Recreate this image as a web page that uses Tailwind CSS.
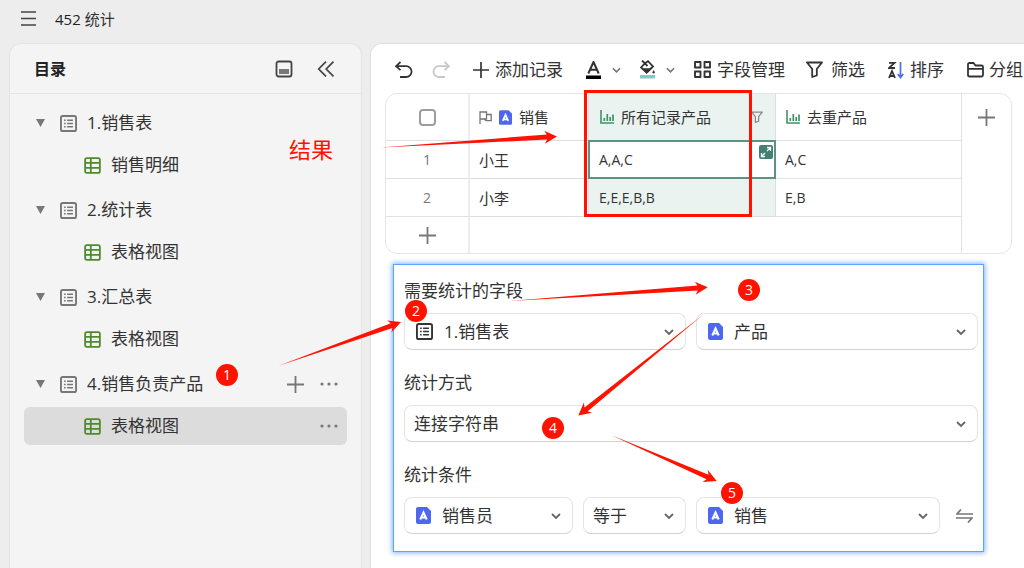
<!DOCTYPE html>
<html lang="zh-CN">

<head>
    <meta charset="UTF-8">
    <meta name="viewport" content="width=device-width, initial-scale=1.0">
    <title>452 统计</title>
    <script src="https://cdn.jsdelivr.net/npm/@tailwindcss/browser@4"></script>
</head>

<body class="relative flex flex-col h-screen overflow-hidden bg-[#ededed] text-[#333] text-[17px] font-['Open_Sans','Noto_Sans_CJK_SC',sans-serif]">
    <!-- shared icons -->
    <svg class="hidden">
        <symbol id="list" viewBox="0 0 18 18">
            <rect x="1" y="1" width="16" height="16" rx="2" fill="none" stroke="currentColor" stroke-width="2" />
            <path d="M4.3 5.5h1.700M4.3 9h1.700M4.3 12.5h1.700M7.5 5.5h6.200M7.5 9h6.200M7.5 12.5h6.200" fill="none" stroke="currentColor" stroke-width="1.7" />
        </symbol>
        <symbol id="grid" viewBox="0 0 18 18">
            <path d="M3 1.2h12q1.8 0 1.8 1.8v12q0 1.8-1.8 1.8H3q-1.8 0-1.8-1.8V3q0-1.8 1.8-1.8zM1.2 6.3h15.6M1.2 11.5h15.6M7.2 1.2v15.6" fill="none" stroke="currentColor" stroke-width="1.9" />
        </symbol>
        <symbol id="chevron" viewBox="0 0 10 6">
            <path d="M1 1l4 4 4-4" fill="none" stroke="currentColor" stroke-width="1.8" />
        </symbol>
        <symbol id="plus" viewBox="0 0 17 17">
            <path d="M8.5 0v17M0 8.5h17" fill="none" stroke="currentColor" stroke-width="1.8" />
        </symbol>
        <symbol id="dots" viewBox="0 0 18 4">
            <circle cx="2" cy="2" r="1.6" fill="currentColor" />
            <circle cx="9" cy="2" r="1.6" fill="currentColor" />
            <circle cx="16" cy="2" r="1.6" fill="currentColor" />
        </symbol>
        <symbol id="text-field" viewBox="0 0 15 17">
            <path d="M2 0h9l4 4v11q0 2-2 2H2q-2 0-2-2V2q0-2 2-2z" fill="#4f66f0" />
            <path d="M4.300 12.500L7.500 5.500 10.700 12.500M5.300 10.600h4.400" fill="none" stroke="#fff" stroke-width="2" />
        </symbol>
        <symbol id="chart" viewBox="0 0 14 14">
            <path d="M1 0v13h13" fill="none" stroke="currentColor" stroke-width="1.6" />
            <path d="M4.300 11V8M7.300 11V4M10.200 11V7M13 11V4.500" fill="none" stroke="currentColor" stroke-width="1.7" />
        </symbol>
        <symbol id="funnel" viewBox="0 0 17 17">
            <path d="M1 1.500h15L10.800 8v6.500L6.200 16V8z" fill="none" stroke="currentColor" stroke-width="1.8" stroke-linejoin="round" />
        </symbol>
    </svg>

    <header class="flex items-center gap-[19px] h-[43px] pb-1.5 px-[21px] shrink-0">
        <button aria-label="菜单">
            <svg class="w-[15px] h-[15px] block" viewBox="0 0 15 15">
                <path d="M0 1h15M0 7.500h15M0 14h15" stroke="#444" stroke-width="1.6" />
            </svg>
        </button>
        <h1 class="text-[15px] leading-6"><span class="font-medium text-[#222]">452</span> 统计</h1>
    </header>

    <div class="flex flex-1 min-h-0 pl-[9px] gap-2">
        <aside class="w-[353px] shrink-0 bg-[#f4f4f4] border border-b-0 border-[#e3e3e3] rounded-t-xl">
            <div class="flex items-center h-[50px] pl-6 pr-[26px] border-b border-[#e5e5e5]">
                <h2 class="flex-1 text-base font-bold text-[#222]">目录</h2>
                <button aria-label="面板" class="mr-6">
                    <svg class="w-[18px] h-[18px] block" viewBox="0 0 18 18">
                        <rect x="1.500" y="1.500" width="15" height="15" rx="2" fill="none" stroke="#444" stroke-width="1.8" />
                        <rect x="4" y="9" width="10" height="5" fill="#777" />
                    </svg>
                </button>
                <button aria-label="收起">
                    <svg class="w-[18px] h-[16px] block" viewBox="0 0 18 16">
                        <path d="M9 .7L1.700 8 9 15.300M16.500 .7L9.200 8l7.300 7.300" fill="none" stroke="#444" stroke-width="1.7" />
                    </svg>
                </button>
            </div>

            <nav class="flex flex-col gap-[7px] pt-[10px] px-[14px]">
                <div class="flex flex-col gap-1">
                    <a href="#" class="flex items-center h-[38px] pl-3 pr-[9px]">
                        <svg class="w-[9px] h-2 mr-[15px]" viewBox="0 0 9 8"><path d="M0 0h9L4.500 8z" fill="#777" /></svg>
                        <svg class="w-[17px] h-[17px] mr-[10px] text-[#777]"><use href="#list" /></svg>
                        1.销售表
                    </a>
                    <a href="#" class="flex items-center h-[38px] pl-[60px] pr-[9px]">
                        <svg class="w-[17px] h-[17px] mr-[10px] text-[#4f8a2b]"><use href="#grid" /></svg>
                        销售明细
                    </a>
                </div>
                <div class="flex flex-col gap-1">
                    <a href="#" class="flex items-center h-[38px] pl-3 pr-[9px]">
                        <svg class="w-[9px] h-2 mr-[15px]" viewBox="0 0 9 8"><path d="M0 0h9L4.500 8z" fill="#777" /></svg>
                        <svg class="w-[17px] h-[17px] mr-[10px] text-[#777]"><use href="#list" /></svg>
                        2.统计表
                    </a>
                    <a href="#" class="flex items-center h-[38px] pl-[60px] pr-[9px]">
                        <svg class="w-[17px] h-[17px] mr-[10px] text-[#4f8a2b]"><use href="#grid" /></svg>
                        表格视图
                    </a>
                </div>
                <div class="flex flex-col gap-1">
                    <a href="#" class="flex items-center h-[38px] pl-3 pr-[9px]">
                        <svg class="w-[9px] h-2 mr-[15px]" viewBox="0 0 9 8"><path d="M0 0h9L4.500 8z" fill="#777" /></svg>
                        <svg class="w-[17px] h-[17px] mr-[10px] text-[#777]"><use href="#list" /></svg>
                        3.汇总表
                    </a>
                    <a href="#" class="flex items-center h-[38px] pl-[60px] pr-[9px]">
                        <svg class="w-[17px] h-[17px] mr-[10px] text-[#4f8a2b]"><use href="#grid" /></svg>
                        表格视图
                    </a>
                </div>
                <div class="flex flex-col gap-1">
                    <div class="flex items-center h-[38px] pl-3 pr-[9px]">
                        <a href="#" class="flex items-center flex-1">
                            <svg class="w-[9px] h-2 mr-[15px]" viewBox="0 0 9 8"><path d="M0 0h9L4.500 8z" fill="#777" /></svg>
                            <svg class="w-[17px] h-[17px] mr-[10px] text-[#777]"><use href="#list" /></svg>
                            4.销售负责产品
                        </a>
                        <button aria-label="新建" class="mr-4"><svg class="w-[17px] h-[17px] block text-[#777]"><use href="#plus" /></svg></button>
                        <button aria-label="更多"><svg class="w-[18px] h-1 block text-[#777]"><use href="#dots" /></svg></button>
                    </div>
                    <div class="flex items-center h-[38px] pl-[60px] pr-[9px] rounded-md bg-[#dcdcdc]">
                        <a href="#" class="flex items-center flex-1">
                            <svg class="w-[17px] h-[17px] mr-[10px] text-[#4f8a2b]"><use href="#grid" /></svg>
                            表格视图
                        </a>
                        <button aria-label="更多"><svg class="w-[18px] h-1 block text-[#777]"><use href="#dots" /></svg></button>
                    </div>
                </div>
            </nav>
        </aside>

        <main class="flex-1 min-w-0 overflow-hidden bg-white border-t border-l border-[#dfdfdf] rounded-tl-xl">
            <div class="flex items-center gap-[19px] h-[49px] pt-0.5 pl-6 whitespace-nowrap *:shrink-0">
                <button aria-label="撤销">
                    <svg class="w-[18px] h-[18px] block" viewBox="0 0 18 18">
                        <path d="M5.500 1L1 5.200l4.500 4M1.500 5.200h9.700a5.400 5.400 0 0 1 0 10.800H5" fill="none" stroke="#333" stroke-width="1.8" />
                    </svg>
                </button>
                <button aria-label="重做" class="mr-1">
                    <svg class="w-[18px] h-[18px] block" viewBox="0 0 18 18">
                        <path d="M12.500 1L17 5.200l-4.500 4M16.500 5.200H6.800a5.400 5.400 0 0 0 0 10.800H13" fill="none" stroke="#c8c8c8" stroke-width="1.8" />
                    </svg>
                </button>
                <button class="flex items-center gap-1.5 mr-1">
                    <svg class="w-4 h-4"><use href="#plus" /></svg>
                    添加记录
                </button>
                <button aria-label="文字颜色" class="flex items-center gap-[11px]">
                    <svg class="w-[15px] h-[18px]" viewBox="0 0 15 18">
                        <path d="M2.300 12.500L7.500 1 12.700 12.500M4.200 8.800h6.600" fill="none" stroke="#333" stroke-width="2" stroke-linejoin="round" />
                        <path d="M0 14.500h15v3.500H0z" fill="#000" />
                    </svg>
                    <svg class="w-[9px] h-[6px] text-[#777]"><use href="#chevron" /></svg>
                </button>
                <button aria-label="填充颜色" class="flex items-center gap-[11px]">
                    <svg class="w-[15px] h-[19px]" viewBox="0 0 15 19">
                        <path d="M2 .5l5.500 5.500M4.500 3.500L8 1.200l5 5.300-6.300 6L1 7.500 4.500 3.800" fill="none" stroke="#333" stroke-width="1.8" />
                        <path d="M1 8.200h11.500L6.700 13.800zM13.600 10l1.400 2.500q-1.400 2-2.800 0z" fill="#333" />
                        <path d="M0 15h15v3.500H0z" fill="#7ecbc8" />
                    </svg>
                    <svg class="w-[9px] h-[6px] text-[#777]"><use href="#chevron" /></svg>
                </button>
                <button class="flex items-center gap-1.5 mr-0.5">
                    <svg class="w-[17px] h-[17px]" viewBox="0 0 17 17">
                        <path d="M1 1h5.500v5.500H1zM10.500 1H16v5.500h-5.500zM1 10.500h5.500V16H1zM10.500 10.500H16V16h-5.500z" fill="none" stroke="#333" stroke-width="1.9" stroke-linejoin="round" />
                    </svg>
                    字段管理
                </button>
                <button class="flex items-center gap-2 mr-1">
                    <svg class="w-[17px] h-[17px]"><use href="#funnel" /></svg>
                    筛选
                </button>
                <button class="flex items-center gap-1.5 mr-1">
                    <svg class="w-4 h-[18px]" viewBox="0 0 16 18">
                        <path d="M1 1.800h5.500L1 7h6M1 17l3-7 3 7M2 15h4" fill="none" stroke="#333" stroke-width="1.8" />
                        <path d="M12.500 1v15M9.800 13l2.700 3.500L15.200 13" fill="none" stroke="#4a6fe8" stroke-width="1.7" />
                    </svg>
                    排序
                </button>
                <button class="flex items-center gap-[5px]">
                    <svg class="w-[17px] h-[16px]" viewBox="0 0 17 16">
                        <path d="M1 13V2.500Q1 1 2.500 1H6.500l2 2.500h6q1.500 0 1.500 1.500v8q0 1.500-1.500 1.500h-12Q1 14.500 1 13zM1 6.800h15" fill="none" stroke="#333" stroke-width="1.8" />
                    </svg>
                    分组
                </button>
            </div>

            <div class="ml-[14px] mr-3 border border-[#e5e5e5] rounded-xl overflow-hidden">
                <table class="w-full table-fixed border-separate border-spacing-0 text-left">
                    <colgroup>
                        <col class="w-[84px]">
                        <col class="w-[119px]">
                        <col class="w-[187px]">
                        <col>
                        <col class="w-[49px]">
                    </colgroup>
                    <thead>
                        <tr class="h-[47px] text-[15px]">
                            <th class="border-b border-r-2 border-b-[#e0e0e0] border-r-[#eee]">
                                <input type="checkbox" aria-label="全选" class="block mx-auto w-[17px] h-[17px] appearance-none border-2 border-[#999ca2] rounded-sm">
                            </th>
                            <th class="border-b border-r border-[#dcdfe0] font-normal">
                                <div class="flex items-center gap-[7px] pl-[9px]">
                                    <svg class="w-[13px] h-[13px]" viewBox="0 0 13 13">
                                        <path d="M1 13V1h6.500v7H1M7.500 3.500h4.700v6.200H7L5 8" fill="none" stroke="#777" stroke-width="1.300" />
                                    </svg>
                                    <svg class="w-[13px] h-[15px]"><use href="#text-field" /></svg>
                                    销售
                                </div>
                            </th>
                            <th class="border-b border-r border-[#dcdfe0] bg-[#ebf3f0] font-normal">
                                <div class="flex items-center gap-[7px] pl-[11px] pr-3">
                                    <svg class="w-[14px] h-[14px] text-[#3f9268]"><use href="#chart" /></svg>
                                    <span class="flex-1">所有记录产品</span>
                                    <svg class="w-3 h-3 text-[#888]"><use href="#funnel" /></svg>
                                </div>
                            </th>
                            <th class="border-b border-r border-[#e2e2e2] font-normal">
                                <div class="flex items-center gap-[7px] pl-[10px]">
                                    <svg class="w-[14px] h-[14px] text-[#3f9268]"><use href="#chart" /></svg>
                                    去重产品
                                </div>
                            </th>
                            <th>
                                <button aria-label="添加字段" class="block mx-auto"><svg class="w-[17px] h-[17px] block text-[#777]"><use href="#plus" /></svg></button>
                            </th>
                        </tr>
                    </thead>
                    <tbody class="text-sm">
                        <tr class="h-[38px]">
                            <td class="border-b border-r-2 border-b-[#e0e0e0] border-r-[#eee] text-center text-[#777]">1</td>
                            <td class="border-b border-r border-[#dcdfe0] pl-[9px] text-[15px] leading-6">小王</td>
                            <td class="relative border-b border-r border-[#dcdfe0] pl-[10px]">
                                <div class="absolute -inset-px border-2 border-[#5a9284]"></div>
                                A,A,C
                                <button aria-label="展开" class="absolute top-1 right-0.5 bg-[#438073] rounded-xs">
                                    <svg class="w-[14px] h-[14px] block" viewBox="0 0 14 14">
                                        <path d="M8 2.500h3.500V6M11.500 2.500L8 6M2.500 8v3.500H6M2.500 11.500L6 8" fill="none" stroke="#fff" stroke-width="1.300" />
                                    </svg>
                                </button>
                            </td>
                            <td class="border-b border-r border-[#e2e2e2] pl-[9px]">A,C</td>
                            <td></td>
                        </tr>
                        <tr class="h-[38px]">
                            <td class="border-b border-r-2 border-b-[#e0e0e0] border-r-[#eee] text-center text-[#777]">2</td>
                            <td class="border-b border-r border-[#dcdfe0] pl-[9px] text-[15px] leading-6">小李</td>
                            <td class="border-b border-r border-[#dcdfe0] bg-[#ebf3f0] pl-[10px]">E,E,E,B,B</td>
                            <td class="border-b border-r border-[#e2e2e2] pl-[9px]">E,B</td>
                            <td></td>
                        </tr>
                        <tr class="h-[36px]">
                            <td class="border-r-2 border-[#eee]">
                                <button aria-label="添加行" class="block mx-auto"><svg class="w-[17px] h-[17px] block text-[#777]"><use href="#plus" /></svg></button>
                            </td>
                            <td colspan="3" class="border-r border-[#e2e2e2]"></td>
                            <td></td>
                        </tr>
                    </tbody>
                </table>
            </div>

            <form class="flex flex-col gap-5 mt-[10px] ml-[22px] mr-10 pt-[13px] pb-[17px] pl-[10px] pr-[5px] border border-[#5ea2ff] shadow-[0_0_5px_1px_#7db4ff]">
                <div>
                    <label for="source" class="block leading-[26px] mb-[9px]">需要统计的字段</label>
                    <div class="grid grid-cols-2 gap-[10px]">
                        <div class="flex items-center h-[37px] px-[11px] border border-[#e4e4e4] border-b-[#d2d2d2] rounded-lg">
                            <svg class="w-[17px] h-[17px] mr-[11px]"><use href="#list" /></svg>
                            <select id="source" class="flex-1 appearance-none outline-none">
                                <option>1.销售表</option>
                            </select>
                            <svg class="w-[10px] h-[6px] text-[#666]"><use href="#chevron" /></svg>
                        </div>
                        <div class="flex items-center h-[37px] px-[11px] border border-[#e4e4e4] border-b-[#d2d2d2] rounded-lg">
                            <svg class="w-[15px] h-[17px] mr-[11px]"><use href="#text-field" /></svg>
                            <select aria-label="字段" class="flex-1 appearance-none outline-none">
                                <option>产品</option>
                            </select>
                            <svg class="w-[10px] h-[6px] text-[#666]"><use href="#chevron" /></svg>
                        </div>
                    </div>
                </div>
                <div>
                    <label for="method" class="block leading-[26px] mb-[9px]">统计方式</label>
                    <div class="flex items-center h-[37px] pl-[9px] pr-[11px] border border-[#e4e4e4] border-b-[#d2d2d2] rounded-lg">
                        <select id="method" class="flex-1 appearance-none outline-none">
                            <option>连接字符串</option>
                        </select>
                        <svg class="w-[10px] h-[6px] text-[#666]"><use href="#chevron" /></svg>
                    </div>
                </div>
                <div>
                    <label for="condition" class="block leading-[26px] mb-[9px]">统计条件</label>
                    <div class="grid grid-cols-[169fr_103fr_244fr_auto] gap-[10px]">
                        <div class="flex items-center h-[37px] px-[11px] border border-[#e4e4e4] border-b-[#d2d2d2] rounded-lg">
                            <svg class="w-[15px] h-[17px] mr-[11px]"><use href="#text-field" /></svg>
                            <select id="condition" class="flex-1 min-w-0 appearance-none outline-none">
                                <option>销售员</option>
                            </select>
                            <svg class="w-[10px] h-[6px] text-[#666]"><use href="#chevron" /></svg>
                        </div>
                        <div class="flex items-center h-[37px] pl-[9px] pr-[11px] border border-[#e4e4e4] border-b-[#d2d2d2] rounded-lg">
                            <select aria-label="比较" class="flex-1 min-w-0 appearance-none outline-none">
                                <option>等于</option>
                            </select>
                            <svg class="w-[10px] h-[6px] text-[#666]"><use href="#chevron" /></svg>
                        </div>
                        <div class="flex items-center h-[37px] px-[11px] border border-[#e4e4e4] border-b-[#d2d2d2] rounded-lg">
                            <svg class="w-[15px] h-[17px] mr-[11px]"><use href="#text-field" /></svg>
                            <select aria-label="目标字段" class="flex-1 min-w-0 appearance-none outline-none">
                                <option>销售</option>
                            </select>
                            <svg class="w-[10px] h-[6px] text-[#666]"><use href="#chevron" /></svg>
                        </div>
                        <button type="button" aria-label="切换" class="pl-[6px] pr-[5px]">
                            <svg class="w-[17px] h-[14px] block" viewBox="0 0 17 14">
                                <path d="M5 .5L1 5h16M0 9h16l-4 4.500" fill="none" stroke="#777" stroke-width="1.700" />
                            </svg>
                        </button>
                    </div>
                </div>
            </form>
        </main>
    </div>

    <!-- annotations -->
    <div class="absolute inset-0 pointer-events-none text-white text-sm">
        <div class="absolute left-[584px] top-[90px] w-[168px] h-[127px] border-3 border-[#ff1200]"></div>
        <svg class="absolute left-0 top-0 w-[1024px] h-[568px]" viewBox="0 0 1024 568" fill="#ff1200">
            <path d="M381 147.500L546.900 134.600 544.100 130.800 557 136.500 544.900 143.800 547.200 139.600z" />
            <path d="M278 366L390.800 323.300 387 320.400 401 322 391.400 332.600 392.400 328.100z" />
            <path d="M510 301L697.500 285.500 694.800 281.700 707.700 287.300 695.600 294.700 697.900 290.500z" />
            <path d="M704 314L584.500 407.400 583.900 402.600 578.300 415.600 592.100 412.800 587.700 411.200z" />
            <path d="M611 435L708.500 474.700 707.800 470 716.700 481 702.600 482 706.500 479.300z" />
        </svg>
        <p class="absolute left-[289px] top-[133px] text-[22px] leading-8 text-[#ff1200]">结果</p>
        <span class="absolute left-[216px] top-[364px] w-[22px] leading-[22px] rounded-full bg-[#ff1200] text-center">1</span>
        <span class="absolute left-[405px] top-[300px] w-[22px] leading-[22px] rounded-full bg-[#ff1200] text-center">2</span>
        <span class="absolute left-[738px] top-[279px] w-[22px] leading-[22px] rounded-full bg-[#ff1200] text-center">3</span>
        <span class="absolute left-[542px] top-[417px] w-[22px] leading-[22px] rounded-full bg-[#ff1200] text-center">4</span>
        <span class="absolute left-[721px] top-[482px] w-[22px] leading-[22px] rounded-full bg-[#ff1200] text-center">5</span>
    </div>
</body>

</html>
